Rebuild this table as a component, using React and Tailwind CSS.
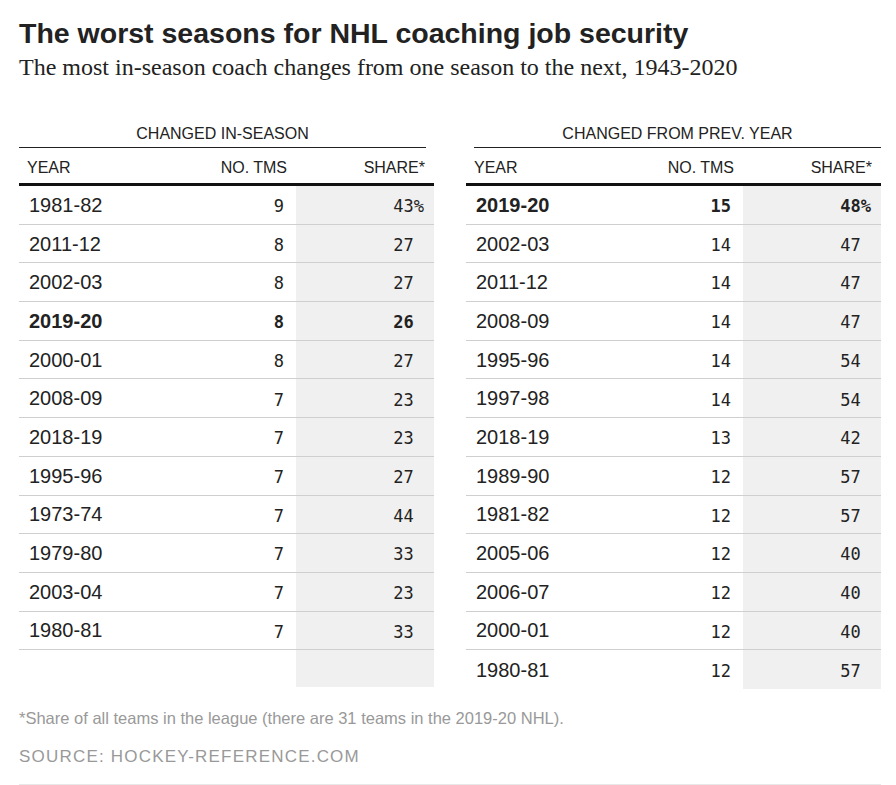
import React from 'react';

const inSeason = [
  ['1981-82', '9', '43', true],
  ['2011-12', '8', '27'],
  ['2002-03', '8', '27'],
  ['2019-20', '8', '26', false, true],
  ['2000-01', '8', '27'],
  ['2008-09', '7', '23'],
  ['2018-19', '7', '23'],
  ['1995-96', '7', '27'],
  ['1973-74', '7', '44'],
  ['1979-80', '7', '33'],
  ['2003-04', '7', '23'],
  ['1980-81', '7', '33'],
];

const prevYear = [
  ['2019-20', '15', '48', true, true],
  ['2002-03', '14', '47'],
  ['2011-12', '14', '47'],
  ['2008-09', '14', '47'],
  ['1995-96', '14', '54'],
  ['1997-98', '14', '54'],
  ['2018-19', '13', '42'],
  ['1989-90', '12', '57'],
  ['1981-82', '12', '57'],
  ['2005-06', '12', '40'],
  ['2006-07', '12', '40'],
  ['2000-01', '12', '40'],
  ['1980-81', '12', '57'],
];

const sans = "font-['Liberation_Sans',Arial,sans-serif]";
const mono = "font-['DejaVu_Sans_Mono',monospace]";

function Table({ title, rows, side, filler }) {
  return (
    <div className="w-[415px] shrink-0">
      <div
        className={`h-[29px] border-b border-[#222] text-center text-[16px] leading-[20px] pt-[5px] ${side === 'left' ? 'mr-[8px]' : 'ml-[8px]'}`}
      >
        {title}
      </div>
      <div className="flex h-[38px] items-center border-b-[3px] border-[#111] pt-[4px] text-[16px]">
        <div className="flex-1 pl-[8px]">YEAR</div>
        <div className="pr-[9px]">NO. TMS</div>
        <div className="w-[138px] text-right pr-[9px]">SHARE*</div>
      </div>
      {rows.map(([year, n, share, pct, bold], i) => {
        const last = i === rows.length - 1 && !filler;
        return (
          <div
            key={year}
            className={`flex h-[38.7px] items-stretch ${last ? '' : 'border-b border-[#cfcfcf]'} ${bold ? 'font-bold' : ''}`}
          >
            <div className="flex flex-1 items-center pl-[10px] text-[20px]">{year}</div>
            <div className={`flex items-center pr-[12px] pt-[4px] text-[17px] ${mono}`}>{n}</div>
            <div className={`flex w-[138px] items-center justify-end bg-[#f0f0f0] pr-[10px] pt-[4px] text-[17px] ${mono}`}>
              {share}
              <span className={pct ? '' : 'invisible'}>%</span>
            </div>
          </div>
        );
      })}
      {filler && (
        <div className="flex h-[37px] justify-end">
          <div className="w-[138px] bg-[#f0f0f0]" />
        </div>
      )}
    </div>
  );
}

export default function App() {
  return (
    <div className={`w-[896px] bg-white text-[#222] ${sans}`}>
      <div className="ml-[19px] w-[862px]">
        <h1 className="pt-[15px] text-[28.5px] font-bold leading-[36px] text-[#222]">
          The worst seasons for NHL coaching job security
        </h1>
        <p className="mt-[1px] font-['Liberation_Serif','Times_New_Roman',serif] text-[24px] leading-[30px] text-[#222]">
          The most in-season coach changes from one season to the next, 1943-2020
        </p>
        <div className="mt-[37px] flex gap-[32px]">
          <Table title="CHANGED IN-SEASON" rows={inSeason} side="left" filler />
          <Table title="CHANGED FROM PREV. YEAR" rows={prevYear} side="right" />
        </div>
        <p className="mt-[19px] text-[16.5px] leading-[20px] text-[#999]">
          *Share of all teams in the league (there are 31 teams in the 2019-20 NHL).
        </p>
        <p className="mt-[19px] pb-[17px] text-[17px] leading-[20px] tracking-[1.2px] text-[#999] border-b border-[#e8e8e8]">
          SOURCE: HOCKEY-REFERENCE.COM
        </p>
      </div>
    </div>
  );
}
